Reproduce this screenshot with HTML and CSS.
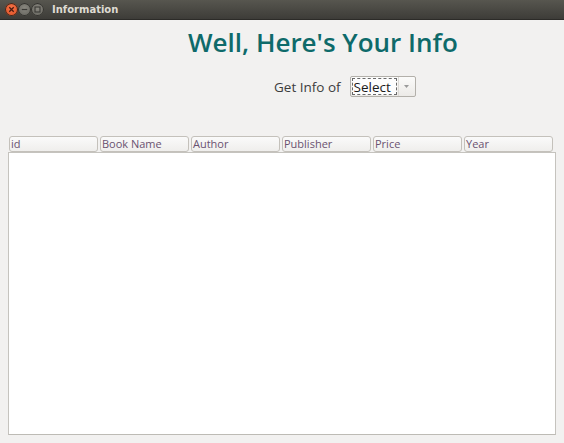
FILE: index.html
```html
<!DOCTYPE html>
<html>
<head>
<meta charset="utf-8">
<link rel="stylesheet" href="styles.css">
</head>
<body>
<div class="window">
  <div class="titlebar">
    <span class="btn close"><svg width="13" height="13" viewBox="0 0 13 13"><path d="M4.3 4.3 L8.7 8.7 M8.7 4.3 L4.3 8.7" stroke="#4a1a10" stroke-width="1.3"/></svg></span>
    <span class="btn grey"><svg width="13" height="13" viewBox="0 0 13 13"><path d="M3.8 6.5 H9.2" stroke="#3a3935" stroke-width="1.2"/></svg></span>
    <span class="btn grey"><svg width="13" height="13" viewBox="0 0 13 13"><rect x="4" y="4" width="5" height="5" fill="none" stroke="#3a3935" stroke-width="1.1"/></svg></span>
    <span class="title">Information</span>
  </div>
  <div class="content">
    <h1 class="heading">Well, Here's Your Info</h1>
    <div class="picker">
      <span class="label">Get Info of</span>
      <div class="combo">
        <span class="combo-text">Select</span>
        <span class="combo-arrow"><svg width="7" height="5" viewBox="0 0 7 5"><path d="M1 1 L3.5 4 L6 1 Z" fill="#9a9a9a"/></svg></span>
      </div>
    </div>
    <div class="table">
      <div class="thead">
        <div class="th">id</div>
        <div class="th">Book Name</div>
        <div class="th">Author</div>
        <div class="th">Publisher</div>
        <div class="th">Price</div>
        <div class="th">Year</div>
      </div>
      <div class="tbody"></div>
    </div>
  </div>
</div>
</body>
</html>
```

FILE: styles.css
```css
* { box-sizing: border-box; }
html, body { margin: 0; padding: 0; }
body {
  width: 564px;
  height: 443px;
  background: #f2f1f0;
  font-family: "Open Sans", "DejaVu Sans", sans-serif;
  overflow: hidden;
}
.window { display: flex; flex-direction: column; height: 443px; }
.titlebar {
  height: 20px;
  background: linear-gradient(#57564f, #3d3c38);
  display: flex;
  align-items: center;
  padding-left: 5px;
  border-bottom: 1px solid #2c2b28;
}
.btn {
  flex: none;
  width: 13px; height: 13px; border-radius: 50%;
  display: inline-flex;
}
.close { background: radial-gradient(circle at 50% 40%, #f4754a, #dc4a1e); box-shadow: 0 0 0 1px #3a2a20 inset; }
.grey { background: radial-gradient(circle at 50% 40%, #8a8880, #5f5e58); box-shadow: 0 0 0 1px #33322e inset; }
.title {
  margin-left: 8px;
  color: #dfdbd2;
  font-family: "DejaVu Sans", sans-serif;
  font-weight: bold;
  font-size: 10px;
}
.content { flex: 1; display: flex; flex-direction: column; padding: 0 8px 8px 8px; }
.heading {
  margin: 7px 0 0 180px;
  font-family: "Open Sans", sans-serif;
  font-weight: 600;
  font-size: 26px;
  line-height: 30px;
  color: #0e6a6a;
}
.picker {
  display: flex; align-items: center;
  margin: 19px 0 0 266px;
}
.label { font-size: 13.5px; color: #3c3c3c; margin-right: 9px; }
.combo {
  width: 66px; height: 21px;
  display: flex; align-items: stretch;
  border: 1px solid #b3b0aa; border-radius: 2px;
  background: linear-gradient(#fbfbfa, #eceae7);
}
.combo-text {
  width: 45px;
  font-size: 13.5px; color: #1a1a1a;
  border: 1px dashed #6a6a6a;
  margin: 1px;
  display: flex; align-items: center; padding-left: 1px;
  background: #fdfdfd;
}
.combo-arrow { flex: 1; display: flex; align-items: center; justify-content: center; border-left: 1px solid #dcdad6; }
.table { margin-top: 39px; flex: 1; display: flex; flex-direction: column; }
.thead { display: flex; gap: 2px; padding-left: 1px; height: 16px; }
.th {
  width: 89px; height: 16px;
  border: 1px solid #c4c1bb; border-radius: 3px;
  background: linear-gradient(#fafafa, #efeeec);
  font-size: 11px; line-height: 14px;
  color: #6a5270;
  padding-left: 1px;
  white-space: nowrap; overflow: hidden;
}
.tbody {
  flex: 1;
  background: #fff;
  border: 1px solid #c5c3be;
  border-bottom-color: #bdbbb5;
}
```
